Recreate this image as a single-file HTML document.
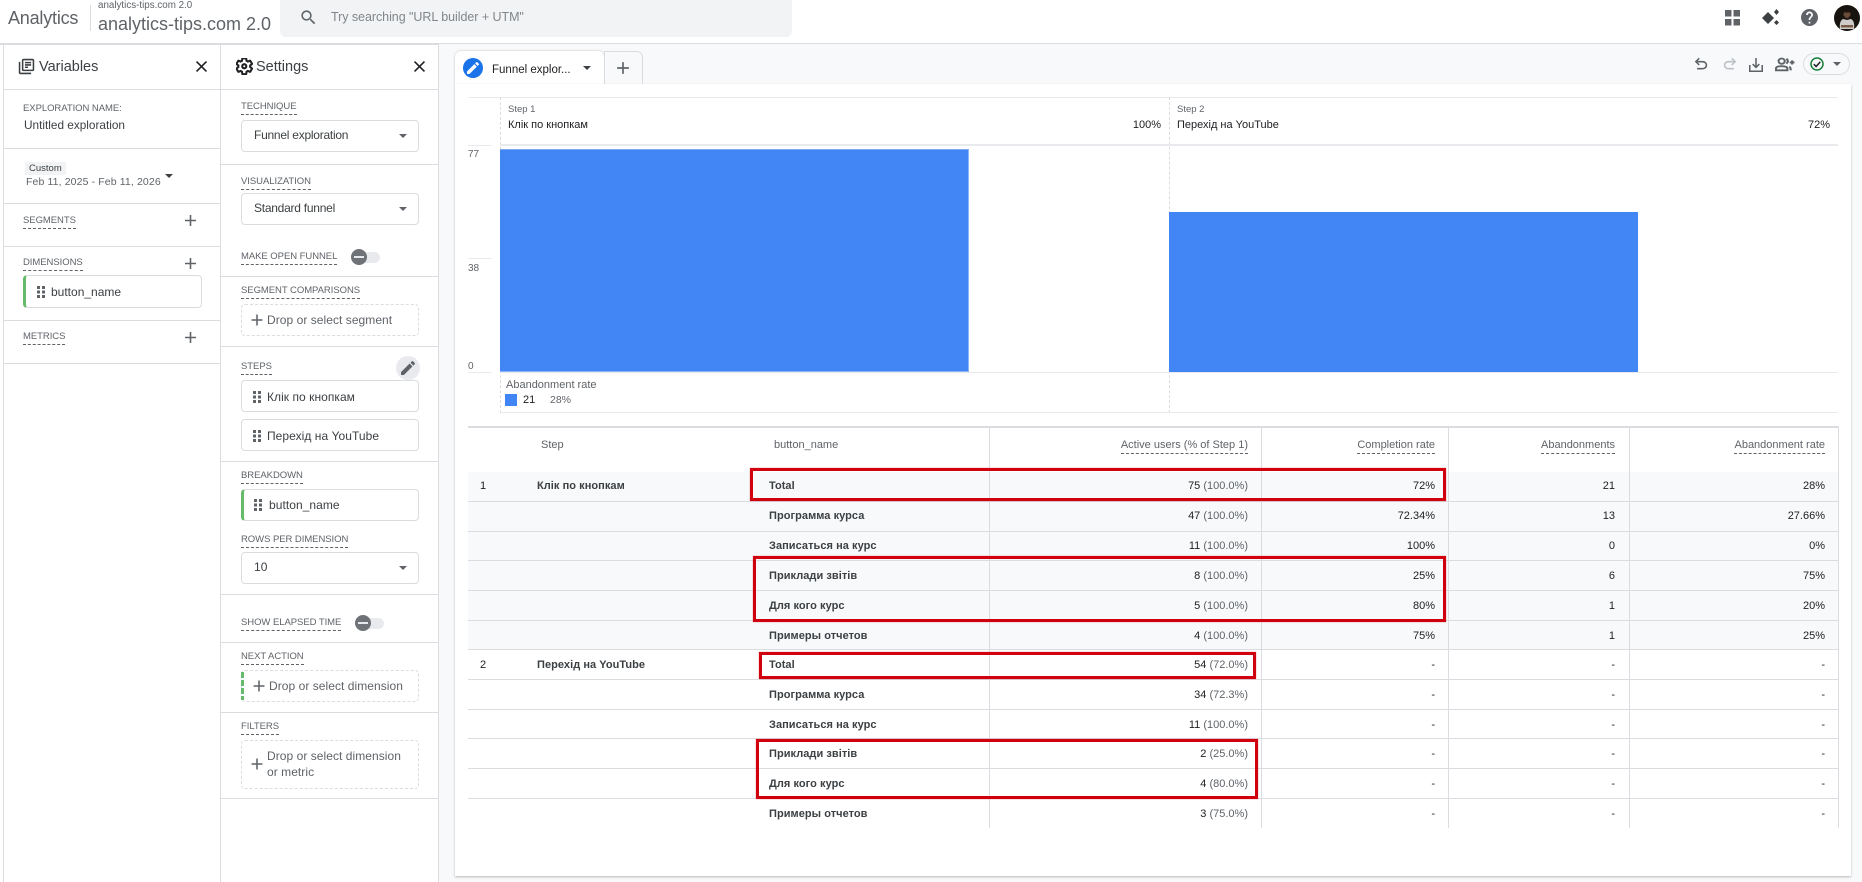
<!DOCTYPE html>
<html><head><meta charset="utf-8"><title>Analytics</title>
<style>
html,body{margin:0;padding:0;width:1862px;height:882px;overflow:hidden;background:#fff;font-family:"Liberation Sans",Arial,sans-serif;color:#202124}
div,span,svg{position:absolute;box-sizing:border-box}
b,i{font-style:normal;font-weight:normal}
.t{white-space:nowrap;line-height:14px}
.ln{background:#dadce0;height:1px}
.lt{background:#e8eaed}
.lb{white-space:nowrap;font-size:9.500px;letter-spacing:-.05px;color:#5f6368;line-height:12px;margin-top:1px;padding-bottom:1px;border-bottom:1px dashed #5f6368;height:14px}
.box{left:241px;width:178px;border:1px solid #dadce0;border-radius:4px;background:#fff;height:32px}
.dash{left:241px;width:178px;border:1px dashed #dadce0;border-radius:4px}
.s{font-size:12px;letter-spacing:.05px;color:#3c4043;left:254px}
.n1{letter-spacing:-.25px}
.g{color:#5f6368}
.arr{width:0;height:0;border-left:4px solid transparent;border-right:4px solid transparent;border-top:4px solid #5f6368}
.r{left:468px;width:1370px;border-bottom:1px solid #dadce0;height:30px}
.r1{background:#f8f9fa}
.c{font-size:11px;line-height:14px;white-space:nowrap;color:#202124;top:7px}
.r2 .c{top:8px}
.n{font-weight:bold;letter-spacing:.05px;color:#3c4043;left:301px}
.st{left:69px;font-weight:bold;letter-spacing:.05px;color:#3c4043}
.a{right:590px}.b{right:403px}.d{right:223px}.e{right:13px}
.c i{color:#5f6368}
.v{width:1px;background:#dadce0;top:426px;height:402px}
.red{border:3px solid #d0000f;box-shadow:0 0 1px rgba(208,0,15,.6)}
.h{font-size:11px;line-height:14px;color:#5f6368;white-space:nowrap;top:438px}
.hd{border-bottom:1px dashed #5f6368;padding-bottom:1px;height:16px}
</style></head><body>
<svg width="0" height="0" style="position:absolute"><defs>
<symbol id="x" viewBox="0 0 24 24"><path d="M19 6.410L17.590 5 12 10.590 6.410 5 5 6.410 10.590 12 5 17.590 6.410 19 12 13.410 17.590 19 19 17.590 13.410 12z"/></symbol>
<symbol id="p" viewBox="0 0 24 24"><path d="M19 13h-6v6h-2v-6H5v-2h6V5h2v6h6v2z"/></symbol>
<symbol id="dr" viewBox="0 0 8 12"><path d="M0 0h3v3H0zM5 0h3v3H5zM0 4.500h3v3H0zM5 4.500h3v3H5zM0 9h3v3H0zM5 9h3v3H5z"/></symbol>
</defs></svg>

<!-- Top bar -->
<div class="t" style="left:8px;top:7px;font-size:18px;line-height:22px;color:#5f6368;letter-spacing:-.2px">Analytics</div>
<div style="left:90px;top:5px;width:1px;height:26px;background:#dadce0"></div>
<div class="t" style="left:98px;top:0;font-size:9.800px;line-height:12px;color:#5f6368">analytics-tips.com 2.0</div>
<div class="t" style="left:98px;top:13px;font-size:18px;line-height:22px;color:#5f6368">analytics-tips.com 2.0</div>
<div style="left:280px;top:0;width:512px;height:37px;background:#f1f3f4;border-radius:0 0 6px 6px"></div>
<svg style="left:299px;top:8px" width="19" height="19" viewBox="0 0 24 24" fill="#5f6368"><path d="M15.500 14h-.79l-.28-.27C15.410 12.590 16 11.110 16 9.500 16 5.910 13.090 3 9.500 3S3 5.910 3 9.500 5.910 16 9.500 16c1.610 0 3.090-.59 4.230-1.570l.27.28v.79l5 4.990L20.490 19l-4.990-5zm-6 0C7.010 14 5 11.990 5 9.500S7.010 5 9.500 5 14 7.010 14 9.500 11.990 14 9.500 14z"/></svg>
<div class="t" style="left:331px;top:10px;font-size:12.500px;color:#80868b;letter-spacing:-.05px">Try searching "URL builder + UTM"</div>
<svg style="left:1725px;top:10px" width="15" height="16" viewBox="0 0 15 16" fill="#5f6368"><path d="M0 0h6.500v6.500H0zM8.500 0H15v6.500H8.500zM0 9h6.500v6.500H0zM8.500 9H15v6.500H8.500z"/></svg>
<svg style="left:1761px;top:8px" width="20" height="20" viewBox="0 0 20 20" fill="#3c4043"><path d="M1 10l6-6 6 6-6 6zM13 4l2.500-3L18 4l-2.500 3zM13 14.500l2.500-2.500 2.500 2.500-2.500 2.500z"/></svg>
<svg style="left:1801px;top:9px" width="17" height="17" viewBox="2 2 20 20" fill="#5f6368"><path d="M12 2C6.480 2 2 6.480 2 12s4.480 10 10 10 10-4.480 10-10S17.520 2 12 2zm1 17h-2v-2h2v2zm2.070-7.750l-.9.92C13.450 12.900 13 13.500 13 15h-2v-.5c0-1.100.45-2.100 1.170-2.830l1.240-1.260c.37-.36.59-.86.59-1.410 0-1.100-.9-2-2-2s-2 .9-2 2H8c0-2.210 1.790-4 4-4s4 1.790 4 4c0 .88-.36 1.680-.93 2.250z"/></svg>
<svg style="left:1834px;top:5px" width="26" height="26" viewBox="0 0 26 26"><defs><clipPath id="cp"><circle cx="13" cy="13" r="13"/></clipPath></defs><g clip-path="url(#cp)"><rect width="26" height="26" fill="#17130f"/><ellipse cx="13" cy="9.500" rx="3.500" ry="4" fill="#6a4c38"/><path d="M9.500 6q3.500-3 7 0v1.500h-7z" fill="#1c1410"/><path d="M10 10.500q3 5 6 0v2q-3 3-6 0z" fill="#2a1e18"/><path d="M6 24q-1-8 3-10l4 1 4-1q4 2 3 10z" fill="#cfcdc9"/><path d="M7 20h12v2.500H7z" fill="#7a5c46"/></g></svg>
<div class="ln" style="left:0;top:43px;width:1862px;height:1.500px"></div>

<!-- Panels -->
<div style="left:3px;top:44px;width:1px;height:838px;background:#dadce0"></div>
<div style="left:220px;top:44px;width:1px;height:838px;background:#dadce0"></div>
<div style="left:438px;top:44px;width:1424px;height:838px;background:#f8f9fa;border-left:1px solid #dadce0"></div>

<!-- Variables panel -->
<svg style="left:18px;top:58px" width="17" height="17" viewBox="1 1 22 22" fill="#3c4043"><path d="M4 6H2v14c0 1.100.9 2 2 2h14v-2H4V6zm16-4H8c-1.100 0-2 .9-2 2v12c0 1.100.9 2 2 2h12c1.100 0 2-.9 2-2V4c0-1.100-.9-2-2-2zm0 14H8V4h12v12zM10 9h8v2h-8zm0 3h4v2h-4zm0-6h8v2h-8z"/></svg>
<div class="t" style="left:39px;top:58px;font-size:14.500px;line-height:18px;color:#3c4043">Variables</div>
<svg style="left:192px;top:56.500px" width="19" height="19" fill="#202124"><use href="#x"/></svg>
<div class="ln" style="left:4px;top:89px;width:216px"></div>
<div class="t" style="left:23px;top:103px;font-size:9.500px;line-height:12px;letter-spacing:-.05px;color:#5f6368">EXPLORATION NAME:</div>
<div class="t" style="left:24px;top:118px;font-size:11.800px;color:#3c4043">Untitled exploration</div>
<div class="ln" style="left:4px;top:148px;width:216px"></div>
<div class="t" style="left:25px;top:162px;height:13px;padding:0 4px;background:#f1f3f4;font-size:9.500px;line-height:13px;color:#3c4043">Custom</div>
<div class="t" style="left:26px;top:175px;font-size:10.500px;letter-spacing:.12px;color:#5f6368">Feb 11, 2025 - Feb 11, 2026</div>
<div class="arr" style="left:165px;top:174px;border-top-color:#3c4043"></div>
<div class="ln" style="left:4px;top:203px;width:216px"></div>
<div class="lb" style="left:23px;top:214px">SEGMENTS</div>
<svg style="left:181px;top:210.500px" width="19" height="19" fill="#5f6368"><use href="#p"/></svg>
<div class="ln" style="left:4px;top:246px;width:216px"></div>
<div class="lb" style="left:23px;top:256px">DIMENSIONS</div>
<svg style="left:181px;top:253.500px" width="19" height="19" fill="#5f6368"><use href="#p"/></svg>
<div style="left:23px;top:275px;width:179px;height:33px;border:1px solid #dadce0;border-left:3px solid #66bb6a;border-radius:4px;background:#fff"></div>
<svg style="left:37px;top:286px" width="8" height="12" fill="#5f6368"><use href="#dr"/></svg>
<div class="t" style="left:51px;top:285px;font-size:12px;color:#3c4043">button_name</div>
<div class="ln" style="left:4px;top:320px;width:216px"></div>
<div class="lb" style="left:23px;top:330px">METRICS</div>
<svg style="left:181px;top:327.500px" width="19" height="19" fill="#5f6368"><use href="#p"/></svg>
<div class="ln" style="left:4px;top:363px;width:216px"></div>

<!-- Settings panel -->
<svg style="left:236px;top:58px" width="16.500" height="16.500" viewBox="2 2 20 20" fill="none" stroke="#202124" stroke-width="2.500"><path d="M19.140 12.940c.04-.3.06-.61.06-.94 0-.32-.02-.64-.07-.94l2.030-1.580c.18-.14.23-.41.12-.61l-1.920-3.320c-.12-.22-.37-.29-.59-.22l-2.390.96c-.5-.38-1.030-.7-1.620-.94l-.36-2.540c-.04-.24-.24-.41-.48-.41h-3.840c-.24 0-.43.17-.47.41l-.36 2.540c-.59.24-1.130.57-1.620.94l-2.390-.96c-.22-.08-.47 0-.59.22L2.740 8.870c-.12.21-.08.47.12.61l2.030 1.580c-.05.3-.09.63-.09.94s.02.64.07.94l-2.030 1.580c-.18.14-.23.41-.12.61l1.920 3.320c.12.22.37.29.59.22l2.390-.96c.5.38 1.030.7 1.620.94l.36 2.540c.05.24.24.41.48.41h3.840c.24 0 .44-.17.47-.41l.36-2.540c.59-.24 1.130-.56 1.620-.94l2.390.96c.22.08.47 0 .59-.22l1.920-3.320c.12-.22.07-.47-.12-.61l-2.010-1.580z"/><circle cx="12" cy="12" r="2.500"/></svg>
<div class="t" style="left:256px;top:58px;font-size:14.500px;line-height:18px;color:#3c4043">Settings</div>
<svg style="left:409.500px;top:56.500px" width="19" height="19" fill="#202124"><use href="#x"/></svg>
<div class="ln" style="left:221px;top:89px;width:217px"></div>

<div class="lb" style="left:241px;top:100px">TECHNIQUE</div>
<div class="box" style="top:120px"></div>
<div class="t s n1" style="top:128px">Funnel exploration</div>
<div class="arr" style="left:399px;top:134px"></div>
<div class="ln" style="left:221px;top:164px;width:217px"></div>

<div class="lb" style="left:241px;top:175px">VISUALIZATION</div>
<div class="box" style="top:193px"></div>
<div class="t s n1" style="top:201px">Standard funnel</div>
<div class="arr" style="left:399px;top:207px"></div>

<div class="lb" style="left:241px;top:250px">MAKE OPEN FUNNEL</div>
<div style="left:356px;top:252px;width:24px;height:11px;border-radius:6px;background:#e8eaed"></div>
<div style="left:351px;top:249px;width:16px;height:16px;border-radius:50%;background:#6f7276"></div>
<div style="left:354px;top:256px;width:10px;height:2px;background:#e8eaed"></div>
<div class="ln" style="left:221px;top:276px;width:217px"></div>

<div class="lb" style="left:241px;top:284px">SEGMENT COMPARISONS</div>
<div class="dash" style="top:304px;height:32px"></div>
<svg style="left:249.500px;top:313px" width="14" height="14" viewBox="3 3 18 18" fill="#5f6368"><use href="#p" width="24" height="24"/></svg>
<div class="t s g" style="left:267px;top:313px">Drop or select segment</div>
<div class="ln" style="left:221px;top:346px;width:217px"></div>

<div class="lb" style="left:241px;top:360px">STEPS</div>
<div style="left:396px;top:356px;width:24px;height:24px;border-radius:50%;background:#e8eaed"></div>
<svg style="left:401px;top:361px" width="14" height="14" viewBox="3 3 18 18" fill="#5f6368"><path d="M3 17.250V21h3.750L17.810 9.940l-3.750-3.750L3 17.250zM20.710 7.040c.39-.39.39-1.020 0-1.410l-2.340-2.340c-.39-.39-1.020-.39-1.410 0l-1.830 1.830 3.750 3.750 1.830-1.830z"/></svg>
<div class="box" style="top:380px"></div>
<svg style="left:253px;top:391px" width="8" height="12" fill="#5f6368"><use href="#dr"/></svg>
<div class="t s" style="left:267px;top:390px">Клік по кнопкам</div>
<div class="box" style="top:419px"></div>
<svg style="left:253px;top:430px" width="8" height="12" fill="#5f6368"><use href="#dr"/></svg>
<div class="t s" style="left:267px;top:429px">Перехід на YouTube</div>
<div class="ln" style="left:221px;top:461px;width:217px"></div>

<div class="lb" style="left:241px;top:469px">BREAKDOWN</div>
<div class="box" style="top:489px;border-left:3px solid #66bb6a"></div>
<svg style="left:254px;top:499px" width="8" height="12" fill="#5f6368"><use href="#dr"/></svg>
<div class="t s" style="left:269px;top:498px">button_name</div>

<div class="lb" style="left:241px;top:533px">ROWS PER DIMENSION</div>
<div class="box" style="top:552px"></div>
<div class="t s" style="top:560px">10</div>
<div class="arr" style="left:399px;top:566px"></div>
<div class="ln" style="left:221px;top:594px;width:217px"></div>

<div class="lb" style="left:241px;top:616px">SHOW ELAPSED TIME</div>
<div style="left:360px;top:618px;width:24px;height:11px;border-radius:6px;background:#e8eaed"></div>
<div style="left:355px;top:615px;width:16px;height:16px;border-radius:50%;background:#6f7276"></div>
<div style="left:358px;top:622px;width:10px;height:2px;background:#e8eaed"></div>
<div class="ln" style="left:221px;top:642px;width:217px"></div>

<div class="lb" style="left:241px;top:650px">NEXT ACTION</div>
<div class="dash" style="top:670px;height:32px"></div>
<div style="left:241px;top:672px;width:3px;height:28px;background:repeating-linear-gradient(#66bb6a 0 6px,transparent 6px 8px)"></div>
<svg style="left:251.500px;top:679px" width="14" height="14" viewBox="3 3 18 18" fill="#5f6368"><use href="#p" width="24" height="24"/></svg>
<div class="t s g" style="left:269px;top:679px">Drop or select dimension</div>
<div class="ln" style="left:221px;top:712px;width:217px"></div>

<div class="lb" style="left:241px;top:720px">FILTERS</div>
<div class="dash" style="top:740px;height:49px"></div>
<svg style="left:249.500px;top:757px" width="14" height="14" viewBox="3 3 18 18" fill="#5f6368"><use href="#p" width="24" height="24"/></svg>
<div class="t s g" style="left:267px;top:749px">Drop or select dimension</div>
<div class="t s g" style="left:267px;top:765px">or metric</div>
<div class="ln" style="left:221px;top:798px;width:217px"></div>

<!-- Main toolbar -->
<div style="left:455px;top:51px;width:149px;height:34px;background:#fff;border-radius:6px 6px 0 0;box-shadow:0 0 2px rgba(60,64,67,.3)"></div>
<div style="left:604px;top:51px;width:39px;height:33px;background:#f8f9fa;border:1px solid #dadce0;border-bottom:0;border-radius:0 6px 0 0"></div>
<div style="left:463px;top:58px;width:20px;height:20px;border-radius:50%;background:#1a73e8"></div>
<svg style="left:467px;top:62px" width="12" height="12" viewBox="3 3 18 18" fill="#fff"><path d="M3 17.250V21h3.750L17.810 9.940l-3.750-3.750L3 17.250zM20.710 7.040c.39-.39.39-1.020 0-1.410l-2.340-2.340c-.39-.39-1.020-.39-1.410 0l-1.830 1.830 3.750 3.750 1.830-1.830z"/></svg>
<div class="t" style="left:492px;top:63px;font-size:11.500px;color:#202124">Funnel explor...</div>
<div class="arr" style="left:583px;top:66px;border-top-color:#3c4043"></div>
<svg style="left:613px;top:58px" width="20" height="20" viewBox="0 0 24 24" fill="#5f6368"><use href="#p"/></svg>

<svg style="left:1694px;top:57px" width="14" height="14" viewBox="3 3 18 18" fill="#5f6368"><path d="M7 19v-2h7.100q1.575 0 2.738-1Q18 15 18 13.500T16.838 11q-1.163-1-2.738-1H7.800l2.600 2.600L9 14 4 9l5-5 1.400 1.400L7.800 8h6.300q2.425 0 4.163 1.575Q20 11.150 20 13.500t-1.737 3.925Q16.525 19 14.100 19z"/></svg>
<svg style="left:1722.500px;top:57px;transform:scaleX(-1)" width="14" height="14" viewBox="3 3 18 18" fill="#bdc1c6"><path d="M7 19v-2h7.100q1.575 0 2.738-1Q18 15 18 13.500T16.838 11q-1.163-1-2.738-1H7.800l2.600 2.600L9 14 4 9l5-5 1.400 1.400L7.800 8h6.300q2.425 0 4.163 1.575Q20 11.150 20 13.500t-1.737 3.925Q16.525 19 14.100 19z"/></svg>
<svg style="left:1749px;top:58px" width="14" height="14" viewBox="3 3 18 18" fill="#5f6368"><path d="M19 12v7H5v-7H3v9h18v-9h-2zm-6 .67l2.590-2.580L17 11.500l-5 5-5-5 1.410-1.410L11 12.670V3h2z"/></svg>
<svg style="left:1775px;top:57px" width="20" height="15" viewBox="0 0 21 18" preserveAspectRatio="none" fill="none" stroke="#5f6368" stroke-width="2.200"><circle cx="7" cy="5" r="3.200"/><path d="M1 16v-2q0-3 6-3t6 3v2zM12 2q3 3 0 6M15 11.500q1.500 1 1.500 4.500"/><path d="M15.500 6.500h5M18 4v5"/></svg>
<div style="left:1803px;top:53px;width:47px;height:22px;border:1px solid #dadce0;border-radius:11px;background:#f8f9fa"></div>
<svg style="left:1810px;top:57px" width="14" height="14" viewBox="0 0 14 14" fill="none"><circle cx="7" cy="7" r="6" stroke="#188038" stroke-width="1.500"/><path d="M3.800 7.200l2.300 2.300 4.200-4.600" stroke="#202124" stroke-width="1.500"/></svg>
<div class="arr" style="left:1833px;top:62px"></div>

<!-- Card -->
<div style="left:455px;top:84px;width:1396px;height:792px;background:#fff;box-shadow:0 1px 2px rgba(60,64,67,.35)"></div>

<!-- Chart -->
<div class="ln lt" style="left:468px;top:97px;width:1370px"></div>
<div style="left:500px;top:97px;height:316px;border-left:1px dashed #dadce0"></div>
<div style="left:1169px;top:97px;height:316px;border-left:1px dashed #dadce0"></div>
<div class="t" style="left:508px;top:103px;font-size:9.500px;color:#5f6368">Step 1</div>
<div class="t" style="left:508px;top:118px;font-size:11px;color:#202124">Клік по кнопкам</div>
<div class="t" style="right:701px;top:118px;font-size:11px;color:#202124">100%</div>
<div class="t" style="left:1177px;top:103px;font-size:9.500px;color:#5f6368">Step 2</div>
<div class="t" style="left:1177px;top:118px;font-size:11px;color:#202124">Перехід на YouTube</div>
<div class="t" style="right:32px;top:118px;font-size:11px;color:#202124">72%</div>
<div class="ln lt" style="left:501px;top:144px;width:1337px;height:2px"></div>
<div class="ln lt" style="left:468px;top:145px;width:24px"></div>
<div class="t" style="left:468px;top:148px;font-size:10px;color:#5f6368">77</div>
<div class="ln lt" style="left:468px;top:258px;width:24px"></div>
<div class="t" style="left:468px;top:262px;font-size:10px;color:#5f6368">38</div>
<div class="ln lt" style="left:468px;top:372px;width:24px"></div>
<div class="t" style="left:468px;top:360px;font-size:10px;color:#5f6368">0</div>
<div style="left:500px;top:149px;width:469px;height:223px;background:#4285f4;border:1px solid #8ab4f8;border-left:0;border-top-color:#7baaf7"></div>
<div style="left:1169px;top:212px;width:469px;height:160px;background:#4285f4"></div>
<div class="ln lt" style="left:500px;top:372px;width:1338px"></div>
<div class="t" style="left:506px;top:378px;font-size:11px;color:#5f6368">Abandonment rate</div>
<div style="left:505px;top:394px;width:12px;height:12px;background:#4285f4"></div>
<div class="t" style="left:523px;top:393px;font-size:11px;color:#202124">21</div>
<div class="t" style="left:550px;top:393px;font-size:10.500px;color:#5f6368">28%</div>
<div class="ln lt" style="left:500px;top:412px;width:1338px"></div>

<!-- Table header -->
<div class="ln" style="left:468px;top:426px;width:1370px;height:1.500px"></div>
<div class="h" style="left:541px">Step</div>
<div class="h" style="left:774px">button_name</div>
<div class="h hd" style="right:614px">Active users (% of Step 1)</div>
<div class="h hd" style="right:427px">Completion rate</div>
<div class="h hd" style="right:247px">Abandonments</div>
<div class="h hd" style="right:37px">Abandonment rate</div>

<!-- Rows -->
<div class="r r1" style="top:472px"><span class="c" style="left:12px">1</span><span class="c st">Клік по кнопкам</span><span class="c n">Total</span><span class="c a">75 <i>(100.0%)</i></span><span class="c b">72%</span><span class="c d">21</span><span class="c e">28%</span></div>
<div class="r r1" style="top:502px"><span class="c n">Программа курса</span><span class="c a">47 <i>(100.0%)</i></span><span class="c b">72.34%</span><span class="c d">13</span><span class="c e">27.66%</span></div>
<div class="r r1" style="top:532px;height:29px"><span class="c n">Записаться на курс</span><span class="c a">11 <i>(100.0%)</i></span><span class="c b">100%</span><span class="c d">0</span><span class="c e">0%</span></div>
<div class="r r1 r2" style="top:561px"><span class="c n">Приклади звітів</span><span class="c a">8 <i>(100.0%)</i></span><span class="c b">25%</span><span class="c d">6</span><span class="c e">75%</span></div>
<div class="r r1 r2" style="top:591px"><span class="c n">Для кого курс</span><span class="c a">5 <i>(100.0%)</i></span><span class="c b">80%</span><span class="c d">1</span><span class="c e">20%</span></div>
<div class="r r1 r2" style="top:621px;height:29px"><span class="c n">Примеры отчетов</span><span class="c a">4 <i>(100.0%)</i></span><span class="c b">75%</span><span class="c d">1</span><span class="c e">25%</span></div>
<div class="r r2" style="top:650px"><span class="c" style="left:12px">2</span><span class="c st">Перехід на YouTube</span><span class="c n">Total</span><span class="c a">54 <i>(72.0%)</i></span><span class="c b">-</span><span class="c d">-</span><span class="c e">-</span></div>
<div class="r r2" style="top:680px"><span class="c n">Программа курса</span><span class="c a">34 <i>(72.3%)</i></span><span class="c b">-</span><span class="c d">-</span><span class="c e">-</span></div>
<div class="r r2" style="top:710px;height:29px"><span class="c n">Записаться на курс</span><span class="c a">11 <i>(100.0%)</i></span><span class="c b">-</span><span class="c d">-</span><span class="c e">-</span></div>
<div class="r r2" style="top:739px"><span class="c n">Приклади звітів</span><span class="c a">2 <i>(25.0%)</i></span><span class="c b">-</span><span class="c d">-</span><span class="c e">-</span></div>
<div class="r r2" style="top:769px"><span class="c n">Для кого курс</span><span class="c a">4 <i>(80.0%)</i></span><span class="c b">-</span><span class="c d">-</span><span class="c e">-</span></div>
<div class="r r2" style="top:799px;border-bottom:0"><span class="c n">Примеры отчетов</span><span class="c a">3 <i>(75.0%)</i></span><span class="c b">-</span><span class="c d">-</span><span class="c e">-</span></div>

<div class="v" style="left:989px"></div>
<div class="v" style="left:1261px"></div>
<div class="v" style="left:1448px"></div>
<div class="v" style="left:1629px"></div>
<div class="v" style="left:1838px"></div>

<!-- Red highlight boxes -->
<div class="red" style="left:750px;top:468px;width:696px;height:33px"></div>
<div class="red" style="left:753px;top:556px;width:693px;height:66px"></div>
<div class="red" style="left:759px;top:652px;width:497px;height:27px"></div>
<div class="red" style="left:756px;top:739px;width:502px;height:60px"></div>
</body></html>
